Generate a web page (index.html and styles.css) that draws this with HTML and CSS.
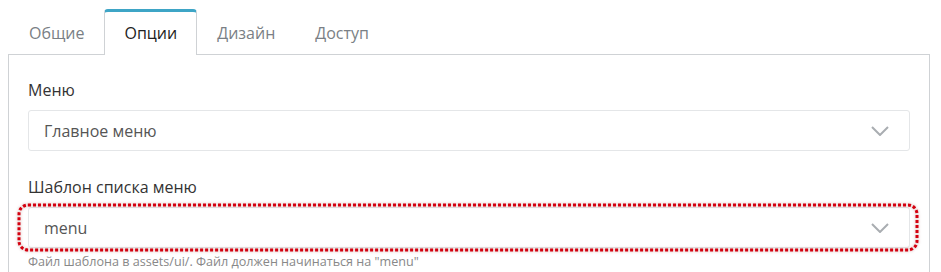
FILE: index.html
```html
<!DOCTYPE html>
<html lang="ru">
<head>
<meta charset="utf-8">
<link rel="stylesheet" href="styles.css">
</head>
<body>
<div class="tabs">
  <div class="tab">Общие</div>
  <div class="tab active">Опции</div>
  <div class="tab">Дизайн</div>
  <div class="tab">Доступ</div>
</div>
<div class="panel">
  <div class="field">
    <div class="label">Меню</div>
    <div class="select">
      <span>Главное меню</span>
      <svg class="chev" width="18" height="10" viewBox="0 0 18 10"><path d="M1 1 L9 9 L17 1" fill="none" stroke="#a9adb1" stroke-width="2"/></svg>
    </div>
  </div>
  <div class="field">
    <div class="label">Шаблон списка меню</div>
    <div class="select-wrap">
      <div class="select">
        <span>menu</span>
        <svg class="chev" width="18" height="10" viewBox="0 0 18 10"><path d="M1 1 L9 9 L17 1" fill="none" stroke="#a9adb1" stroke-width="2"/></svg>
      </div>
      <svg class="mark" width="902" height="49" viewBox="0 0 902 49"><rect x="2" y="2" width="898" height="45" rx="9" ry="9" fill="none" stroke="#d4000f" stroke-width="3" stroke-dasharray="3 2"/></svg>
    </div>
    <div class="help">Файл шаблона в assets/ui/. Файл должен начинаться на "menu"</div>
  </div>
</div>
</body>
</html>
```
FILE: styles.css
```css
html, body {
  margin: 0;
  padding: 0;
  background: #fff;
  overflow: hidden;
}
body {
  font-family: "Open Sans", "Noto Sans", sans-serif;
  color: #333;
  padding: 9px 11px 0 8px;
}
.tabs {
  display: flex;
  padding-left: 1px;
  height: 45px;
}
.tab {
  box-sizing: border-box;
  height: 45px;
  padding: 4px 20px 0;
  font-size: 16px;
  line-height: 41px;
  color: #7a7f85;
}
.tab.active {
  color: #222;
  background: #fff;
  border: 1px solid #cfd2d5;
  border-top: 3px solid #3ea5c6;
  border-bottom: none;
  border-radius: 4px 4px 0 0;
  padding: 1px 19px 0;
  height: 46px;
  margin-bottom: -1px;
  position: relative;
  z-index: 1;
}
.panel {
  border: 1px solid #cfd2d5;
  border-bottom: none;
  padding: 24px 19px 0;
  height: 193px;
}
.field + .field {
  margin-top: 25px;
}
.label {
  font-size: 16px;
  line-height: 22px;
  color: #333;
  margin-bottom: 9px;
}
.select-wrap {
  position: relative;
}
.select {
  box-sizing: border-box;
  height: 41px;
  border: 1px solid #e4e6e8;
  border-radius: 3px;
  display: flex;
  align-items: center;
  justify-content: space-between;
  padding: 0 20px 0 15px;
  font-size: 16px;
  color: #555;
  background: #fff;
}
.chev {
  display: block;
}
.mark {
  position: absolute;
  left: -11px;
  top: -4px;
  filter: drop-shadow(0 0 1.5px rgba(120, 0, 0, 0.35));
}
.help {
  margin-top: 6px;
  font-size: 12.6px;
  line-height: 16px;
  color: #888;
}
```
